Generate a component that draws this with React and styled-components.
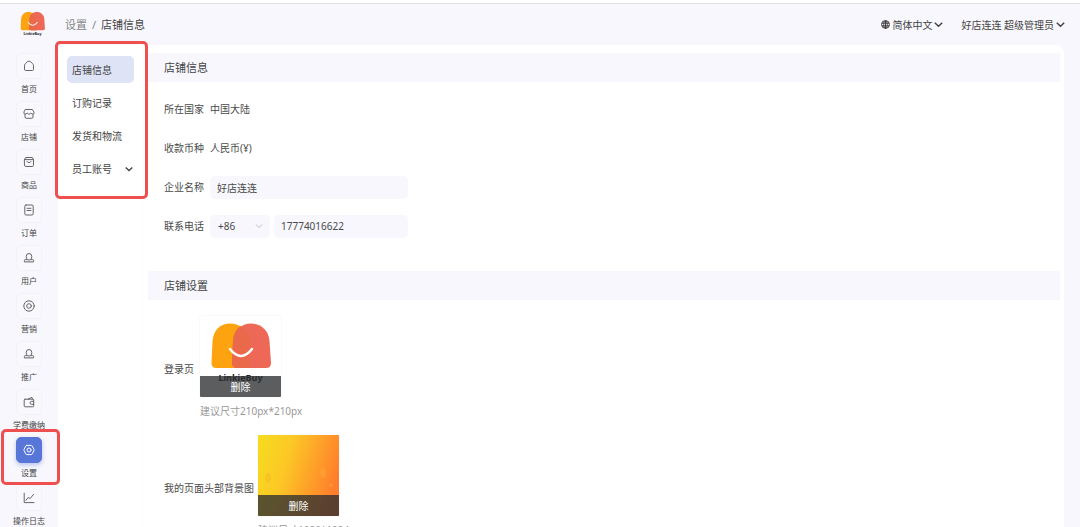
import React from 'react';
import styled, { createGlobalStyle, css } from 'styled-components';

const GlobalStyle = createGlobalStyle`
  * {
    box-sizing: border-box;
  }

  body {
    margin: 0;
    background: #f7f7fd;
    color: #4a4a4a;
    font-family: 'Noto Sans', 'Noto Sans CJK SC', sans-serif;
    font-size: 10px;
    line-height: 14px;
  }

  button, input, select {
    font: inherit;
    color: inherit;
    border: none;
    margin: 0;
    padding: 0;
  }

  a {
    color: inherit;
    text-decoration: none;
  }
`;

const Page = styled.div`
  display: flex;
  height: 100vh;
  overflow: hidden;
  border-top: 3px solid #fff;
`;

const Sidebar = styled.nav`
  flex: 0 0 58px;
  display: flex;
  flex-direction: column;
  align-items: center;
  border-top: 1px solid #dfe1e6;
`;

const Brand = styled.a`
  flex: 0 0 49px;
  padding-top: 5px;
  padding-left: 6px;

  svg {
    display: block;
  }
`;

const highlight = css`
  content: '';
  position: absolute;
  border: 3px solid #ee4f4f;
  border-radius: 5px;
  pointer-events: none;
`;

const NavItem = styled.a`
  position: relative;
  flex: 0 0 48px;
  width: 58px;
  display: flex;
  flex-direction: column;
  align-items: center;
  gap: 4px;
  color: #444;
  font-size: 8px;
  line-height: 12px;
  white-space: nowrap;

  ${({ $marked }) => $marked && css`
    &::after {
      ${highlight}
      inset: -8px -2px 0 1px;
      z-index: 2;
    }
  `}
`;

const NavIcon = styled.span`
  display: flex;
  align-items: center;
  justify-content: center;
  width: 26px;
  height: 26px;
  border-radius: 5px;
  border: 1px solid ${({ $active }) => ($active ? '#5876d8' : '#f2f2f7')};
  background: ${({ $active }) => ($active ? '#5876d8' : '#f9f9fd')};
  color: ${({ $active }) => ($active ? '#fff' : '#666')};
  box-shadow: ${({ $active }) => ($active ? '0 2px 4px rgba(88, 118, 216, 0.4)' : 'none')};
`;

const Content = styled.div`
  flex: 1;
  min-width: 0;
  display: flex;
  flex-direction: column;
  border-top: 1px solid #dfe1e6;
`;

const Header = styled.header`
  flex: 0 0 41px;
  display: flex;
  align-items: center;
  justify-content: space-between;
  padding: 0 15px 0 7px;
`;

const Breadcrumb = styled.div`
  display: flex;
  gap: 5px;
  font-size: 11px;
  color: #888;
`;

const Current = styled.span`
  color: #444;
`;

const HeaderActions = styled.div`
  display: flex;
  gap: 18px;
`;

const HeaderButton = styled.button`
  display: flex;
  align-items: center;
  gap: 2px;
  background: none;
  color: #444;
`;

const Panel = styled.div`
  flex: 1;
  min-height: 0;
  display: flex;
  margin-right: 16px;
  background: #fff;
  border-radius: 8px 8px 0 0;
`;

const Aside = styled.aside`
  flex: 0 0 85px;
  border-right: 1px solid #fcfcfe;
`;

const Menu = styled.div`
  position: relative;
  display: flex;
  flex-direction: column;
  gap: 6px;
  padding: 11px 8px 17px 9px;

  &::after {
    ${highlight}
    inset: -4px -6px 0 -3px;
  }
`;

const MenuItem = styled.a`
  display: flex;
  align-items: center;
  justify-content: space-between;
  height: 27px;
  padding: 0 1px 0 5px;
  border-radius: 5px;
  color: #444;
  background: ${({ $active }) => ($active ? '#dfe3f6' : 'transparent')};
`;

const Main = styled.main`
  flex: 1;
  min-width: 0;
  padding: 8px 4px 0 5px;
`;

const Section = styled.section`
  margin-bottom: 33px;
`;

const SectionTitle = styled.h2`
  margin: 0;
  padding: 0 16px;
  font-size: 11px;
  font-weight: 400;
  line-height: 29px;
  color: #444;
  background: #f7f7fd;
`;

const Fields = styled.div`
  display: flex;
  flex-direction: column;
  gap: 15px;
  padding: 15px 16px 0;
`;

const Uploads = styled(Fields)`
  gap: 14px;
  padding-top: 16px;
`;

const Field = styled.div`
  display: flex;
  align-items: center;
  gap: ${({ $tight }) => ($tight ? 4 : 6)}px;
  min-height: 24px;
`;

const Controls = styled.div`
  display: flex;
  gap: 4px;
  width: 198px;
`;

const TextInput = styled.input`
  flex: 1;
  min-width: 0;
  height: 23px;
  padding: 0 7px;
  border-radius: 5px;
  background: #f7f7fd;
`;

const SelectBox = styled.div`
  display: grid;
  align-items: center;
  width: 60px;

  > * {
    grid-area: 1 / 1;
  }

  svg {
    justify-self: end;
    margin-right: 7px;
    color: #bbb;
    pointer-events: none;
  }
`;

const Select = styled.select`
  width: 100%;
  height: 23px;
  padding: 0 8px;
  appearance: none;
  border-radius: 5px;
  background: #f7f7fd;
`;

const Upload = styled.div`
  display: flex;
  flex-direction: column;
  gap: 4px;
`;

const Picture = styled.div`
  display: flex;
  position: relative;
  width: 81px;
  height: 81px;
  border-radius: 1px;
  overflow: hidden;
  box-shadow: 0 0 1px #ccc;
`;

const RemoveButton = styled.button`
  position: absolute;
  inset: auto 0 0;
  height: 21px;
  color: #fff;
  background: rgba(45, 47, 50, 0.78);
`;

const Hint = styled.span`
  line-height: 20px;
  color: #999;
  white-space: nowrap;
`;

const icons = {
  home: <path d="M1.500 5.500Q1.500 4.600 2.200 3.900L4.300 1.800Q6 .5 7.700 1.800L9.800 3.900Q10.500 4.600 10.500 5.500V9.400Q10.500 10.500 9.400 10.500H2.600Q1.500 10.500 1.500 9.400Z" />,
  shop: <path d="M2.600 1.500H9.400L11 4.200V5.300Q10.500 6.300 9.400 6.100L7.600 5.200 6 6.400 4.400 5.200 2.600 6.100Q1.500 6.300 1 5.300V4.200ZM2 6V9Q2 10.300 3.200 10.300H8.800Q10 10.300 10 9V6" />,
  goods: <path d="M1.500 3.600L2.600 1.500H9.400L10.500 3.600V9.300Q10.500 10.500 9.300 10.500H2.700Q1.500 10.500 1.500 9.300ZM1.500 3.600H10.500M4 5.400Q6 8.400 8 5.400" />,
  order: <path d="M3 1H9Q10.200 1 10.200 2.200V9.800Q10.200 11 9 11H3Q1.800 11 1.800 9.800V2.200Q1.800 1 3 1ZM4 4.300H8M4 6.500H8" />,
  user: (
    <>
      <path d="M4.300 7.600Q3.200 6.200 3.200 4.400 3.300 1.500 6 1.500T8.800 4.400Q8.800 6.200 7.700 7.600Z" />
      <path d="M3.600 7.600H2.300Q1.400 7.600 1.400 8.500V9.900H10.600V8.500Q10.600 7.600 9.700 7.600H8.400" />
    </>
  ),
  target: (
    <>
      <circle cx="6" cy="6" r="5.200" />
      <circle cx="6" cy="6" r="2.300" />
    </>
  ),
  wallet: <path d="M2.100 3.200H9.800Q10.700 3.200 10.700 4.100V9.900Q10.700 10.800 9.800 10.800H2.100Q1.200 10.800 1.200 9.900V4.100Q1.200 3.200 2.100 3.200ZM5 3.200L8.800 1.300 9.600 3.200M10.700 5.300H8.600Q7.100 5.300 7.100 6.800T8.600 8.300H10.700" />,
  settings: (
    <>
      <path d="M3.700 1.400H8.300Q8.800 1.400 9 1.800L11 5.400Q11.200 6 11 6.500L9 10.200Q8.800 10.600 8.300 10.600H3.700Q3.200 10.600 3 10.200L1 6.500Q.8 6 1 5.400L3 1.800Q3.200 1.400 3.700 1.400Z" />
      <circle cx="6" cy="6" r="2" />
    </>
  ),
  chart: <path d="M1.200 1.200V10.600H11M3 8.300L5.100 5.500 7.200 6.500 10.500 2.400" />,
};

const navItems = [
  { label: '首页', icon: 'home' },
  { label: '店铺', icon: 'shop' },
  { label: '商品', icon: 'goods' },
  { label: '订单', icon: 'order' },
  { label: '用户', icon: 'user' },
  { label: '营销', icon: 'target' },
  { label: '推广', icon: 'user' },
  { label: '学费缴纳', icon: 'wallet' },
  { label: '设置', icon: 'settings', active: true },
  { label: '操作日志', icon: 'chart' },
];

const menuItems = [
  { label: '店铺信息', active: true },
  { label: '订购记录' },
  { label: '发货和物流' },
  { label: '员工账号', expandable: true },
];

function Icon({ name }) {
  return (
    <svg width="12" height="12" viewBox="0 0 12 12" fill="none" stroke="currentColor" strokeWidth="1" strokeLinejoin="round" strokeLinecap="round">
      {icons[name]}
    </svg>
  );
}

function Chevron({ size = 9, weight = 1.5 }) {
  return (
    <svg width={size} height={size} viewBox="0 0 9 9" fill="none" stroke="currentColor" strokeWidth={weight}>
      <path d="M.8 2.700L4.500 6.300 8.200 2.700" />
    </svg>
  );
}

function Globe() {
  return (
    <svg width="9" height="9" viewBox="0 0 9 9" fill="none" stroke="currentColor" strokeWidth="1">
      <circle cx="4.500" cy="4.500" r="3.900" />
      <ellipse cx="4.500" cy="4.500" rx="1.800" ry="3.900" />
      <path d="M.6 3.200H8.400M.6 5.800H8.400M4.500 .6V8.400" />
    </svg>
  );
}

function Logo({ size }) {
  return (
    <svg width={size} height={size} viewBox="0 0 81 81" aria-label="LinkieBuy">
      <path d="M11.500 47L12.500 25C13.500 14 20 7.500 30 7.500S49 14 50 25V52H16Q11.500 52 11.500 47Z" fill="#fda30f" />
      <path d="M32 47L33 25C34 14 41 7.500 51 7.500S68.500 14 69.500 25L71 47Q71 52 66 52H37Q32 52 32 47Z" fill="#ed6857" />
      <path d="M32 47L33 25C33.500 18 36 13 40.500 10.500 46 13.500 49.500 19 50 25V52H37Q32 52 32 47Z" fill="#e9694a" />
      <path d="M30 33Q41 47 52 33" fill="none" stroke="#fff" strokeWidth="2.500" strokeLinecap="round" />
      <text x="40.500" y="65" textAnchor="middle" fontSize="9" fontWeight="700" fill="#222">LinkieBuy</text>
    </svg>
  );
}

function Backdrop() {
  return (
    <svg width="81" height="81" viewBox="0 0 81 81">
      <defs>
        <linearGradient id="warm" x1="0" y1="0.2" x2="1" y2="0.5">
          <stop offset="0" stopColor="#f6da20" />
          <stop offset="0.35" stopColor="#fcc825" />
          <stop offset="1" stopColor="#ff7d2c" />
        </linearGradient>
      </defs>
      <rect width="81" height="81" fill="url(#warm)" />
      <ellipse cx="10" cy="43" rx="3" ry="5" fill="#f2b51d" opacity="0.4" />
      <ellipse cx="65" cy="38" rx="3" ry="5" fill="#ffa63a" opacity="0.5" />
      <circle cx="73" cy="50" r="2" fill="#ffa63a" opacity="0.5" />
    </svg>
  );
}

function SideNav() {
  return (
    <Sidebar>
      <Brand href="#">
        <Logo size={33} />
      </Brand>
      {navItems.map(({ label, icon, active }) => (
        <NavItem key={label} href="#" $marked={active}>
          <NavIcon $active={active}>
            <Icon name={icon} />
          </NavIcon>
          {label}
        </NavItem>
      ))}
    </Sidebar>
  );
}

function ShopInfo() {
  return (
    <Section>
      <SectionTitle>店铺信息</SectionTitle>
      <Fields>
        <Field>
          <span>所在国家</span>
          <span>中国大陆</span>
        </Field>
        <Field>
          <span>收款币种</span>
          <span>人民币(¥)</span>
        </Field>
        <Field>
          <label htmlFor="company">企业名称</label>
          <Controls>
            <TextInput id="company" defaultValue="好店连连" />
          </Controls>
        </Field>
        <Field>
          <label htmlFor="phone">联系电话</label>
          <Controls>
            <SelectBox>
              <Select aria-label="区号" defaultValue="+86">
                <option>+86</option>
              </Select>
              <Chevron size={8} weight={1} />
            </SelectBox>
            <TextInput id="phone" type="tel" defaultValue="17774016622" />
          </Controls>
        </Field>
      </Fields>
    </Section>
  );
}

function ShopSettings() {
  return (
    <Section>
      <SectionTitle>店铺设置</SectionTitle>
      <Uploads>
        <Field>
          <span>登录页</span>
          <Upload>
            <Picture>
              <Logo size={81} />
              <RemoveButton type="button">删除</RemoveButton>
            </Picture>
            <Hint>建议尺寸210px*210px</Hint>
          </Upload>
        </Field>
        <Field $tight>
          <span>我的页面头部背景图</span>
          <Upload>
            <Picture>
              <Backdrop />
              <RemoveButton type="button">删除</RemoveButton>
            </Picture>
            <Hint>建议尺寸1080*1284</Hint>
          </Upload>
        </Field>
      </Uploads>
    </Section>
  );
}

function App() {
  return (
    <>
      <GlobalStyle />
      <Page>
        <SideNav />
        <Content>
          <Header>
            <Breadcrumb>
              <a href="#">设置</a>
              <span>/</span>
              <Current>店铺信息</Current>
            </Breadcrumb>
            <HeaderActions>
              <HeaderButton type="button">
                <Globe />
                简体中文
                <Chevron />
              </HeaderButton>
              <HeaderButton type="button">
                好店连连 超级管理员
                <Chevron />
              </HeaderButton>
            </HeaderActions>
          </Header>
          <Panel>
            <Aside>
              <Menu>
                {menuItems.map(({ label, active, expandable }) => (
                  <MenuItem key={label} href="#" $active={active}>
                    {label}
                    {expandable && <Chevron size={8} />}
                  </MenuItem>
                ))}
              </Menu>
            </Aside>
            <Main>
              <ShopInfo />
              <ShopSettings />
            </Main>
          </Panel>
        </Content>
      </Page>
    </>
  );
}

export default App;
